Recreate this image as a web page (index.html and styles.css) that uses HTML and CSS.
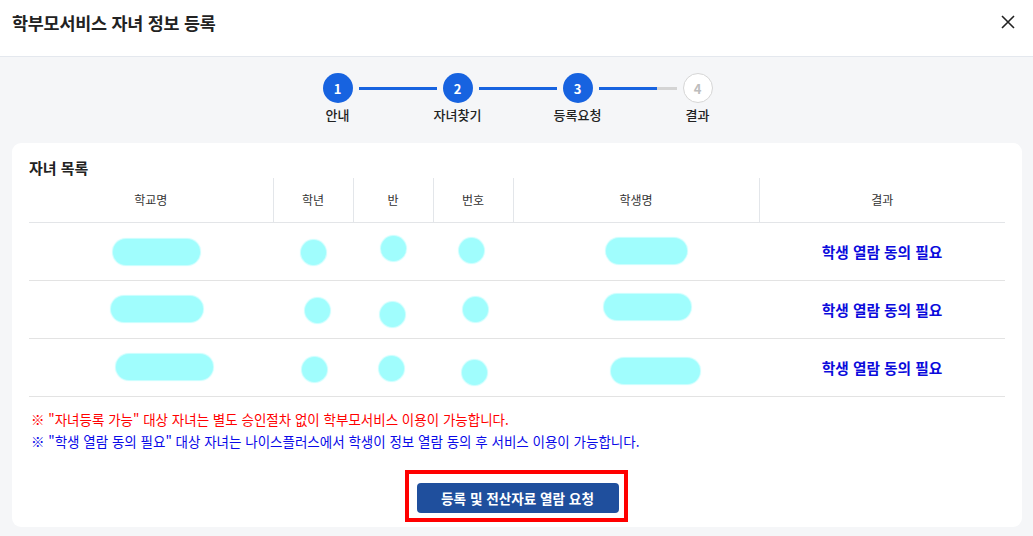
FILE: index.html
```html
<!DOCTYPE html>
<html lang="ko">
<head>
<meta charset="utf-8">
<link rel="stylesheet" href="styles.css">
</head>
<body>
<div class="modal">
  <header class="modal-head">
    <h1 class="modal-title">학부모서비스 자녀 정보 등록</h1>
    <button class="close" aria-label="닫기">
      <svg width="14" height="14" viewBox="0 0 14 14"><path d="M1 1L13 13M13 1L1 13" stroke="#222" stroke-width="1.6" fill="none"/></svg>
    </button>
  </header>
  <main class="modal-body">
    <div class="stepper">
      <span class="dot done">1</span><span class="line done"></span>
      <span class="dot done">2</span><span class="line done"></span>
      <span class="dot done">3</span><span class="line half"></span>
      <span class="dot todo">4</span>
      <span class="label l1">안내</span>
      <span class="label l2">자녀찾기</span>
      <span class="label l3">등록요청</span>
      <span class="label l4">결과</span>
    </div>
    <section class="card">
      <h2 class="card-title">자녀 목록</h2>
      <table class="list">
        <thead>
          <tr><th class="c1">학교명</th><th class="c2">학년</th><th class="c3">반</th><th class="c4">번호</th><th class="c5">학생명</th><th class="c6">결과</th></tr>
        </thead>
        <tbody>
          <tr>
            <td><span class="blob pill" style="width:87px;--dx:5px;--dy:0px"></span></td>
            <td><span class="blob dotb" style="--dx:0px;--dy:0px"></span></td>
            <td><span class="blob dotb" style="--dx:0px;--dy:-4px"></span></td>
            <td><span class="blob dotb" style="--dx:-2px;--dy:-2px"></span></td>
            <td><span class="blob pill" style="width:81px;--dx:10px;--dy:-1px"></span></td>
            <td class="res">학생 열람 동의 필요</td>
          </tr>
          <tr>
            <td><span class="blob pill" style="width:92px;--dx:6px;--dy:-1px"></span></td>
            <td><span class="blob dotb" style="--dx:4px;--dy:0px"></span></td>
            <td><span class="blob dotb" style="--dx:-1px;--dy:4px"></span></td>
            <td><span class="blob dotb" style="--dx:2px;--dy:-1px"></span></td>
            <td><span class="blob pill" style="width:87px;--dx:11px;--dy:-3px"></span></td>
            <td class="res">학생 열람 동의 필요</td>
          </tr>
          <tr>
            <td><span class="blob pill" style="width:97px;--dx:13px;--dy:-1px"></span></td>
            <td><span class="blob dotb" style="--dx:1px;--dy:1px"></span></td>
            <td><span class="blob dotb" style="--dx:-2px;--dy:0px"></span></td>
            <td><span class="blob dotb" style="--dx:1px;--dy:4px"></span></td>
            <td><span class="blob pill" style="width:89px;--dx:19px;--dy:3px"></span></td>
            <td class="res">학생 열람 동의 필요</td>
          </tr>
        </tbody>
      </table>
      <p class="note red">※ "자녀등록 가능" 대상 자녀는 별도 승인절차 없이 학부모서비스 이용이 가능합니다.</p>
      <p class="note blue">※ "학생 열람 동의 필요" 대상 자녀는 나이스플러스에서 학생이 정보 열람 동의 후 서비스 이용이 가능합니다.</p>
      <div class="actions">
        <div class="highlight">
          <button class="primary">등록 및 전산자료 열람 요청</button>
        </div>
      </div>
    </section>
  </main>
</div>
</body>
</html>
```

FILE: styles.css
```css
* { box-sizing: border-box; }
html, body { margin: 0; padding: 0; }
body {
  font-family: "Noto Sans CJK KR", "Noto Sans", sans-serif;
  color: #222;
  background: #f5f6f8;
  width: 1033px;
  height: 536px;
  overflow: hidden;
}
.modal { display: flex; flex-direction: column; height: 536px; }
.modal-head {
  height: 57px;
  background: #fff;
  border-bottom: 1px solid #e4e8ee;
  display: flex;
  align-items: center;
  justify-content: space-between;
  padding: 0 18px 12px 12px;
}
.modal-title { margin: 0; font-size: 17.4px; font-weight: 700; color: #222; letter-spacing: -0.2px; }
.close {
  border: 0; background: none; padding: 0; width: 14px; height: 14px;
  display: flex; align-items: center; justify-content: center; cursor: pointer;
}
.modal-body { flex: 1; padding: 16px 11px 9px 12px; display: flex; flex-direction: column; }

.stepper {
  display: grid;
  grid-template-columns: 30px 90px 30px 90px 30px 90px 30px;
  grid-template-rows: 30px 20px;
  justify-content: center;
  align-items: center;
  margin-left: 1px;
}
.dot {
  width: 30px; height: 30px; border-radius: 50%;
  display: flex; align-items: center; justify-content: center;
  font-size: 13px; font-weight: 700;
}
.dot.done { background: #1763e0; color: #fff; }
.dot.todo { background: #fff; color: #bdbdbd; border: 1px solid #d6d6d6; }
.line { height: 3px; margin: 0 6px; background: #1763e0; }
.line.half { background: linear-gradient(to right, #1763e0 0 58px, #d4d4d4 58px); }
.label {
  grid-row: 2; justify-self: center; white-space: nowrap;
  font-size: 13px; font-weight: 500; color: #222; line-height: 18px; margin-top: 3px;
}
.l1 { grid-column: 1; }
.l2 { grid-column: 3; }
.l3 { grid-column: 5; }
.l4 { grid-column: 7; }

.card {
  margin-top: 20px;
  flex: 1;
  background: #fff;
  border-radius: 9px;
  padding: 15px 17px 0 17px;
}
.card-title { margin: 0; font-size: 15px; font-weight: 700; line-height: 20px; color: #222; }
.list { width: 100%; border-collapse: collapse; table-layout: fixed; }
.list th {
  height: 44px; font-size: 12px; font-weight: 400; color: #333;
  border-bottom: 1px solid #e3e5e8; border-left: 1px solid #e3e6ea; padding: 0;
}
.list th.c1 { border-left: 0; width: 244px; }
.list th.c2, .list th.c3, .list th.c4 { width: 80px; }
.list th.c5 { width: 246px; }
.list td {
  height: 58px; border-bottom: 1px solid #e3e3e3; text-align: center; padding: 0;
  vertical-align: middle;
}
.blob {
  display: inline-block; vertical-align: middle;
  background: #a0fdfd;
  box-shadow: 0 0 1px 1px rgba(160,253,253,0.6);
  transform: translate(var(--dx), var(--dy));
}
.blob.pill { height: 26px; border-radius: 13px; }
.blob.dotb { width: 25px; height: 25px; border-radius: 50%; }
.res { font-size: 14.7px; font-weight: 700; color: #0b0bdc; }

.note { margin: 0 0 0 2px; font-size: 13.5px; line-height: 22px; }
.note.red { color: #ff0000; margin-top: 11px; }
.note.blue { color: #0a0ae8; }
.actions { display: flex; justify-content: center; margin-top: 18px; margin-left: -2px; }
.highlight { border: 4px solid #f00; padding: 9px 5px 5px 8px; }
.primary {
  width: 202px; height: 30px; border: 0; border-radius: 4px;
  background: #1f4f9d; color: #fff; font-family: inherit;
  font-size: 13.6px; font-weight: 700; display: block;
}
```
